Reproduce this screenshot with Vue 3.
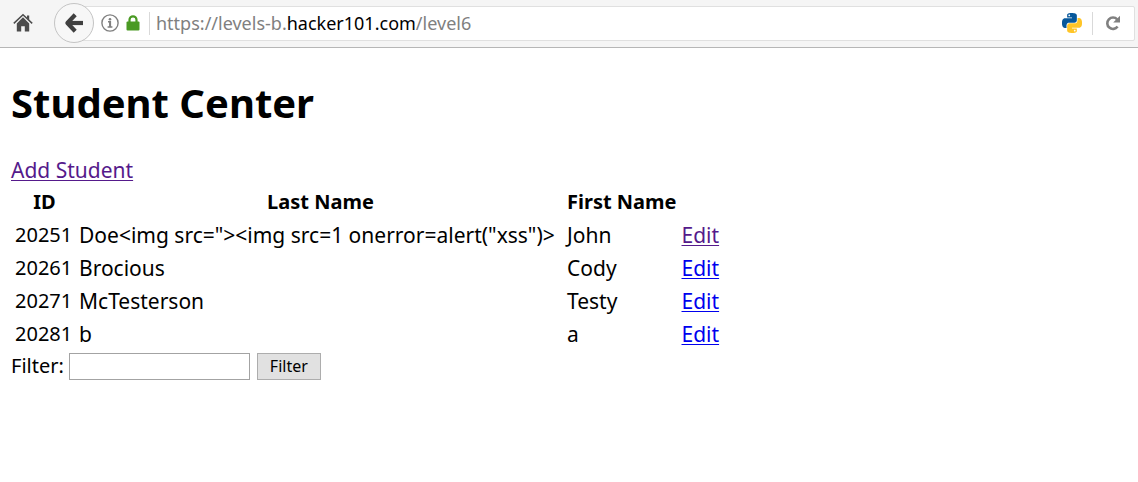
<script setup>
import { ref } from 'vue'

const filter = ref('')
const students = [
  { id: 20251, last: 'Doe<img src="><img src=1 onerror=alert("xss")>', first: 'John', visited: true },
  { id: 20261, last: 'Brocious', first: 'Cody', visited: false },
  { id: 20271, last: 'McTesterson', first: 'Testy', visited: false },
  { id: 20281, last: 'b', first: 'a', visited: false },
]
const snake =
  'M14.25.18l.9.2.73.26.59.3.45.32.34.34.25.34.16.33.1.3.04.26.02.2-.01.13V8.5l-.05.63-.13.55-.21.46-.26.38-.3.31-.33.25-.35.19-.35.14-.33.1-.3.07-.26.04-.21.02H8.77l-.69.05-.59.14-.5.22-.41.27-.33.32-.27.35-.2.36-.15.37-.1.35-.07.32-.04.27-.02.21v3.06H3.17l-.21-.03-.28-.07-.32-.12-.35-.18-.36-.26-.36-.36-.35-.46-.32-.59-.28-.73-.21-.88-.14-1.05-.05-1.23.06-1.22.16-1.04.24-.87.32-.71.36-.57.4-.44.42-.33.42-.24.4-.16.36-.1.32-.05.24-.01h.16l.06.01h8.16v-.83H6.18l-.01-2.75-.02-.37.05-.34.11-.31.17-.28.25-.26.31-.23.38-.2.44-.18.51-.15.58-.12.64-.1.71-.06.77-.04.84-.02 1.27.05zm-6.3 1.98l-.23.33-.08.41.08.41.23.34.33.22.41.09.41-.09.33-.22.23-.34.08-.41-.08-.41-.23-.33-.33-.22-.41-.09-.41.09z'
</script>

<template>
  <header class="toolbar">
    <button class="home" aria-label="Home">
      <svg width="20" height="20" viewBox="0 0 20 20" fill="#4c4c4c">
        <path d="M10 4.2 16.2 10.4V18.5H11.8V13.2H8.2V18.5H3.8V10.4Z" />
        <path d="M14 2.5h2.2v4.5L14 5z" />
        <path d="M.8 10.4 10 1.8l9.2 8.6" fill="none" stroke="#4c4c4c" stroke-width="1.5" />
      </svg>
    </button>
    <button class="back" aria-label="Back">
      <svg width="20" height="20" viewBox="0 0 20 20" fill="none" stroke="#404040" stroke-width="4.2">
        <path d="M11.2 1.8 3.4 10l7.8 8.2" stroke-linejoin="round" />
        <path d="M4 10h15" />
      </svg>
    </button>
    <div class="address">
      <button class="info" aria-label="Site information">
        <svg width="18" height="18" viewBox="0 0 18 18">
          <circle cx="9" cy="9" r="8.1" fill="none" stroke="#808080" stroke-width="1.4" />
          <circle cx="9" cy="5.2" r="1.3" fill="#808080" />
          <path d="M7 7.8h2.2v5M6.6 13.1h4.8" fill="none" stroke="#808080" stroke-width="1.5" />
          <path d="M9.1 7.1v6" fill="none" stroke="#808080" stroke-width="2" />
        </svg>
        <svg width="14" height="16" viewBox="0 0 14 16">
          <path d="M3.5 8V4.8a3.5 3.5 0 0 1 7 0V8" fill="none" stroke="#4a9a23" stroke-width="2.2" />
          <rect x=".5" y="6.6" width="13" height="8.9" rx="1" fill="#4a9a23" />
        </svg>
      </button>
      <span class="divider"></span>
      <span class="url">https://levels-b.<b>hacker101.com</b>/level6</span>
      <button class="python" aria-label="Python">
        <svg width="20" height="20" viewBox="0 0 24 24">
          <path :d="snake" fill="#07589b" />
          <path :d="snake" fill="#ffc527" transform="rotate(180 12 12)" />
        </svg>
      </button>
      <span class="divider"></span>
      <button class="reload" aria-label="Reload">
        <svg width="16" height="16" viewBox="0 0 16 16">
          <path d="M12.2 4.4A5.7 5.7 0 1 0 12.6 11.6" fill="none" stroke="#808080" stroke-width="2.6" />
          <path d="M15 .8v6.8H8.2Z" fill="#808080" />
        </svg>
      </button>
    </div>
  </header>

  <main class="page">
    <h1>Student Center</h1>
    <p><a href="#add" class="visited">Add Student</a></p>
    <table>
      <colgroup>
        <col class="c-id" />
        <col class="c-last" />
        <col class="c-first" />
        <col />
      </colgroup>
      <thead>
        <tr>
          <th>ID</th>
          <th>Last Name</th>
          <th>First Name</th>
          <td></td>
        </tr>
      </thead>
      <tbody>
        <tr v-for="s in students" :key="s.id">
          <td class="id">{{ s.id }}</td>
          <td>{{ s.last }}</td>
          <td>{{ s.first }}</td>
          <td><a :href="'#edit-' + s.id" :class="{ visited: s.visited }">Edit</a></td>
        </tr>
      </tbody>
    </table>
    <form @submit.prevent>
      <label for="filter">Filter:</label>
      <input id="filter" v-model="filter" type="text" />
      <button type="submit">Filter</button>
    </form>
  </main>
</template>

<style>
body {
  background: #fff;
}
</style>

<style scoped>
.toolbar,
.page {
  font-family: 'Noto Sans', 'Open Sans', sans-serif;
}
.toolbar {
  display: flex;
  align-items: center;
  box-sizing: border-box;
  height: 48px;
  padding: 0 3px 1px 13px;
  background: #f5f5f5;
  border-bottom: 1px solid #b6b6b6;
}
.toolbar button {
  display: flex;
  align-items: center;
  justify-content: center;
  padding: 0;
  border: 0;
  background: none;
}
.toolbar .home {
  margin-right: 21px;
}
.toolbar .back {
  position: relative;
  box-sizing: border-box;
  width: 40px;
  height: 40px;
  flex: none;
  border: 1px solid #c4c4c4;
  border-radius: 50%;
  background: #f7f7f7;
}
.address {
  display: flex;
  align-items: center;
  flex: 1;
  box-sizing: border-box;
  height: 35px;
  margin-left: -12px;
  padding: 0 13px 0 18px;
  background: #fff;
  border: 1px solid #e0e0e0;
  border-radius: 2px;
}
.toolbar .info {
  gap: 7px;
}
.divider {
  width: 1px;
  height: 23px;
  margin: 0 6px 0 9px;
  background: #d9d9d9;
}
.url {
  flex: 1;
  font-size: 18px;
  line-height: 24px;
  color: #808080;
}
.url b {
  font-weight: 400;
  color: #000;
}
.python + .divider {
  margin: 0 12px 0 10px;
}
.page {
  padding: 0 11px;
  font-size: 20px;
  line-height: 28px;
  color: #000;
}
h1 {
  margin: 27px 0 26px;
  font-size: 40px;
  line-height: 56px;
  font-weight: 700;
}
p {
  margin: 0;
  font-size: 21px;
  line-height: 27px;
}
a {
  color: #00e;
  text-decoration: underline 1px;
  text-underline-offset: 2px;
}
a.visited {
  color: #551a8b;
}
table {
  border-spacing: 3px;
}
td,
th {
  padding: 1px;
  text-align: left;
  white-space: nowrap;
}
td {
  font-size: 21px;
}
th {
  text-align: center;
}
th,
.id {
  font-size: 20px;
}
.c-id {
  width: 61px;
}
.c-last {
  width: 485px;
}
.c-first {
  width: 111px;
}
form {
  display: flex;
  align-items: center;
}
input {
  box-sizing: border-box;
  width: 181px;
  height: 27px;
  margin: 0 7px 0 5px;
  padding: 1px 4px;
  border: 1px solid #a3a3a3;
  background: #fff;
  font: inherit;
  font-size: 16px;
}
form button {
  box-sizing: border-box;
  height: 27px;
  padding: 0 12px;
  border: 1px solid #adadad;
  background: #e1e1e1;
  color: #000;
  font: inherit;
  font-size: 16px;
  line-height: 24px;
}
</style>
